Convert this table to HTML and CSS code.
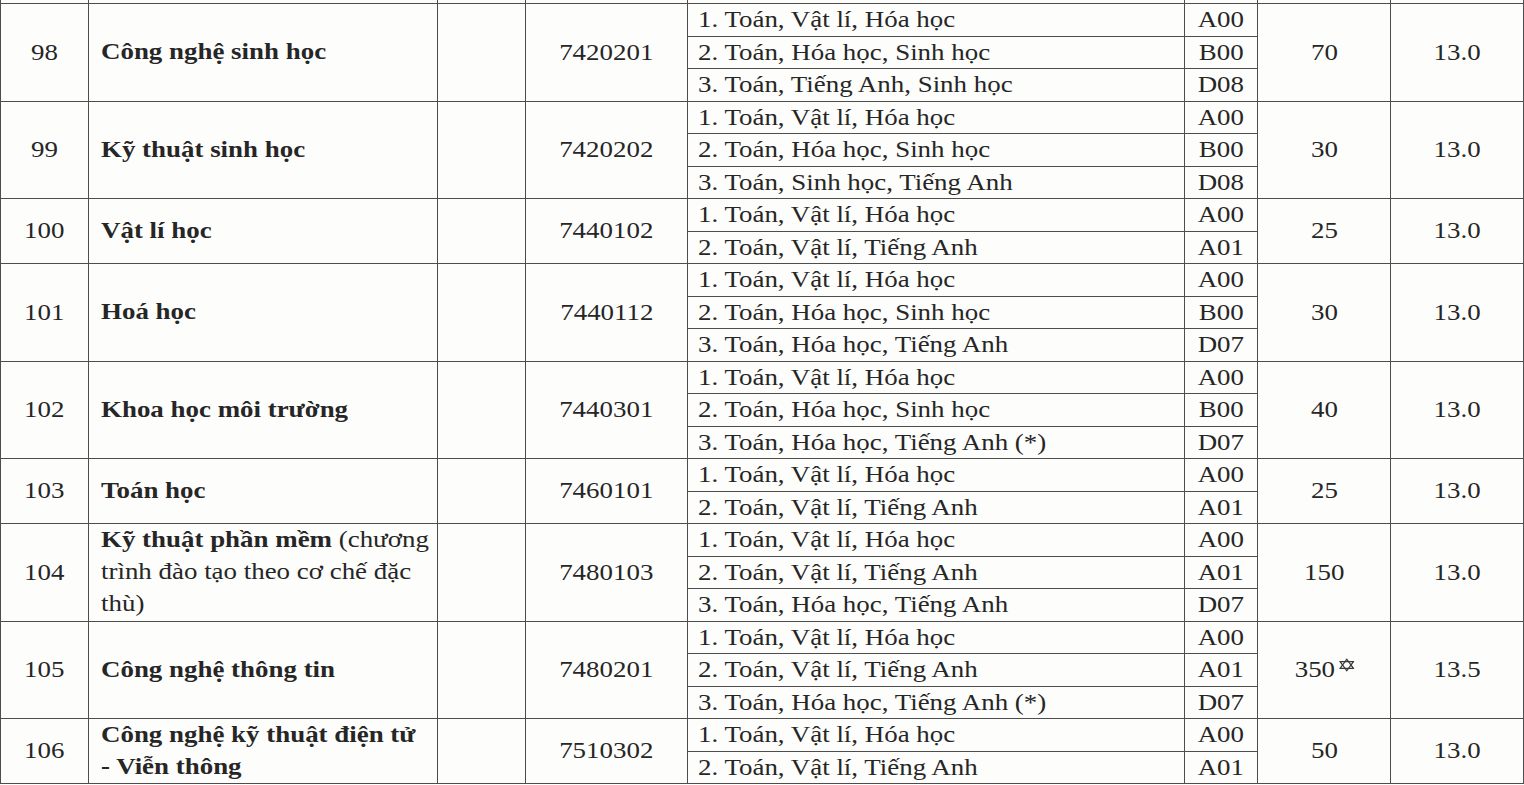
FILE: index.html
```html
<!DOCTYPE html>
<html lang="vi">
<head>
<meta charset="utf-8">
<title>Bảng ngành</title>
<link rel="stylesheet" href="styles.css">
</head>
<body>
<table class="grid">
  <colgroup>
    <col class="c-stt"><col class="c-name"><col class="c-empty"><col class="c-code">
    <col class="c-combo"><col class="c-block"><col class="c-quota"><col class="c-score">
  </colgroup>
  <tbody>
    <tr class="cut"><td></td><td></td><td></td><td></td><td></td><td></td><td></td><td></td></tr>

    <tr><td rowspan="3" class="stt"><span class="t">98</span></td><td rowspan="3" class="name"><span class="t"><b>Công nghệ sinh học</b></span></td><td rowspan="3"></td><td rowspan="3" class="code"><span class="t">7420201</span></td><td class="combo"><span class="t">1. Toán, Vật lí, Hóa học</span></td><td class="block"><span class="t">A00</span></td><td rowspan="3" class="num"><span class="t">70</span></td><td rowspan="3" class="num"><span class="t">13.0</span></td></tr>
    <tr><td class="combo"><span class="t">2. Toán, Hóa học, Sinh học</span></td><td class="block"><span class="t">B00</span></td></tr>
    <tr><td class="combo"><span class="t">3. Toán, Tiếng Anh, Sinh học</span></td><td class="block"><span class="t">D08</span></td></tr>

    <tr><td rowspan="3" class="stt"><span class="t">99</span></td><td rowspan="3" class="name"><span class="t"><b>Kỹ thuật sinh học</b></span></td><td rowspan="3"></td><td rowspan="3" class="code"><span class="t">7420202</span></td><td class="combo"><span class="t">1. Toán, Vật lí, Hóa học</span></td><td class="block"><span class="t">A00</span></td><td rowspan="3" class="num"><span class="t">30</span></td><td rowspan="3" class="num"><span class="t">13.0</span></td></tr>
    <tr><td class="combo"><span class="t">2. Toán, Hóa học, Sinh học</span></td><td class="block"><span class="t">B00</span></td></tr>
    <tr><td class="combo"><span class="t">3. Toán, Sinh học, Tiếng Anh</span></td><td class="block"><span class="t">D08</span></td></tr>

    <tr><td rowspan="2" class="stt"><span class="t">100</span></td><td rowspan="2" class="name"><span class="t"><b>Vật lí học</b></span></td><td rowspan="2"></td><td rowspan="2" class="code"><span class="t">7440102</span></td><td class="combo"><span class="t">1. Toán, Vật lí, Hóa học</span></td><td class="block"><span class="t">A00</span></td><td rowspan="2" class="num"><span class="t">25</span></td><td rowspan="2" class="num"><span class="t">13.0</span></td></tr>
    <tr><td class="combo"><span class="t">2. Toán, Vật lí, Tiếng Anh</span></td><td class="block"><span class="t">A01</span></td></tr>

    <tr><td rowspan="3" class="stt"><span class="t">101</span></td><td rowspan="3" class="name"><span class="t"><b>Hoá học</b></span></td><td rowspan="3"></td><td rowspan="3" class="code"><span class="t">7440112</span></td><td class="combo"><span class="t">1. Toán, Vật lí, Hóa học</span></td><td class="block"><span class="t">A00</span></td><td rowspan="3" class="num"><span class="t">30</span></td><td rowspan="3" class="num"><span class="t">13.0</span></td></tr>
    <tr><td class="combo"><span class="t">2. Toán, Hóa học, Sinh học</span></td><td class="block"><span class="t">B00</span></td></tr>
    <tr><td class="combo"><span class="t">3. Toán, Hóa học, Tiếng Anh</span></td><td class="block"><span class="t">D07</span></td></tr>

    <tr><td rowspan="3" class="stt"><span class="t">102</span></td><td rowspan="3" class="name"><span class="t"><b>Khoa học môi trường</b></span></td><td rowspan="3"></td><td rowspan="3" class="code"><span class="t">7440301</span></td><td class="combo"><span class="t">1. Toán, Vật lí, Hóa học</span></td><td class="block"><span class="t">A00</span></td><td rowspan="3" class="num"><span class="t">40</span></td><td rowspan="3" class="num"><span class="t">13.0</span></td></tr>
    <tr><td class="combo"><span class="t">2. Toán, Hóa học, Sinh học</span></td><td class="block"><span class="t">B00</span></td></tr>
    <tr><td class="combo"><span class="t">3. Toán, Hóa học, Tiếng Anh (*)</span></td><td class="block"><span class="t">D07</span></td></tr>

    <tr><td rowspan="2" class="stt"><span class="t">103</span></td><td rowspan="2" class="name"><span class="t"><b>Toán học</b></span></td><td rowspan="2"></td><td rowspan="2" class="code"><span class="t">7460101</span></td><td class="combo"><span class="t">1. Toán, Vật lí, Hóa học</span></td><td class="block"><span class="t">A00</span></td><td rowspan="2" class="num"><span class="t">25</span></td><td rowspan="2" class="num"><span class="t">13.0</span></td></tr>
    <tr><td class="combo"><span class="t">2. Toán, Vật lí, Tiếng Anh</span></td><td class="block"><span class="t">A01</span></td></tr>

    <tr><td rowspan="3" class="stt"><span class="t">104</span></td><td rowspan="3" class="name"><span class="t"><b>Kỹ thuật phần mềm</b> (chương<br>trình đào tạo theo cơ chế đặc<br>thù)</span></td><td rowspan="3"></td><td rowspan="3" class="code"><span class="t">7480103</span></td><td class="combo"><span class="t">1. Toán, Vật lí, Hóa học</span></td><td class="block"><span class="t">A00</span></td><td rowspan="3" class="num"><span class="t">150</span></td><td rowspan="3" class="num"><span class="t">13.0</span></td></tr>
    <tr><td class="combo"><span class="t">2. Toán, Vật lí, Tiếng Anh</span></td><td class="block"><span class="t">A01</span></td></tr>
    <tr><td class="combo"><span class="t">3. Toán, Hóa học, Tiếng Anh</span></td><td class="block"><span class="t">D07</span></td></tr>

    <tr><td rowspan="3" class="stt"><span class="t">105</span></td><td rowspan="3" class="name"><span class="t"><b>Công nghệ thông tin</b></span></td><td rowspan="3"></td><td rowspan="3" class="code"><span class="t">7480201</span></td><td class="combo"><span class="t">1. Toán, Vật lí, Hóa học</span></td><td class="block"><span class="t">A00</span></td><td rowspan="3" class="num"><span class="t">350<svg class="star" viewBox="0 0 14 14" width="13" height="14" aria-hidden="true"><polygon points="7,0.8 13.2,10.6 0.8,10.6" fill="none" stroke="#3a3a3a" stroke-width="1.2"/><polygon points="7,13.2 13.2,3.4 0.8,3.4" fill="none" stroke="#3a3a3a" stroke-width="1.2"/></svg></span></td><td rowspan="3" class="num"><span class="t">13.5</span></td></tr>
    <tr><td class="combo"><span class="t">2. Toán, Vật lí, Tiếng Anh</span></td><td class="block"><span class="t">A01</span></td></tr>
    <tr><td class="combo"><span class="t">3. Toán, Hóa học, Tiếng Anh (*)</span></td><td class="block"><span class="t">D07</span></td></tr>

    <tr><td rowspan="2" class="stt"><span class="t">106</span></td><td rowspan="2" class="name"><span class="t"><b>Công nghệ kỹ thuật điện tử<br>- Viễn thông</b></span></td><td rowspan="2"></td><td rowspan="2" class="code"><span class="t">7510302</span></td><td class="combo"><span class="t">1. Toán, Vật lí, Hóa học</span></td><td class="block"><span class="t">A00</span></td><td rowspan="2" class="num"><span class="t">50</span></td><td rowspan="2" class="num"><span class="t">13.0</span></td></tr>
    <tr><td class="combo"><span class="t">2. Toán, Vật lí, Tiếng Anh</span></td><td class="block"><span class="t">A01</span></td></tr>
  </tbody>
</table>
</body>
</html>
```

FILE: styles.css
```css
html, body {
  margin: 0;
  padding: 0;
  background: #fdfdfc;
}

body {
  font-family: "Liberation Serif", "Times New Roman", serif;
  font-size: 23px;
  color: #262626;
  overflow: hidden;
}

.grid {
  border-collapse: collapse;
  table-layout: fixed;
  width: 1523px;
}

.c-stt { width: 88px; }
.c-name { width: 349px; }
.c-empty { width: 88px; }
.c-code { width: 162px; }
.c-combo { width: 497px; }
.c-block { width: 73px; }
.c-quota { width: 133px; }
.c-score { width: 133px; }

.grid td {
  border: 1px solid #4d4d4d;
  padding: 0;
  vertical-align: middle;
  line-height: 31.5px;
  white-space: nowrap;
  overflow: visible;
}

.grid tr.cut td {
  border-top: none;
  height: 3px;
  line-height: 3px;
}

.t {
  display: inline-block;
  transform: scaleX(1.17);
  transform-origin: center center;
}

.stt,
.code,
.block,
.num {
  text-align: center;
}

.name {
  padding-left: 12px !important;
  text-align: left;
  line-height: 32px !important;
}

.name .t,
.combo .t {
  transform-origin: left center;
}

.combo {
  padding-left: 10px !important;
  text-align: left;
}

.star {
  vertical-align: 5px;
  margin-left: 3px;
}
```
